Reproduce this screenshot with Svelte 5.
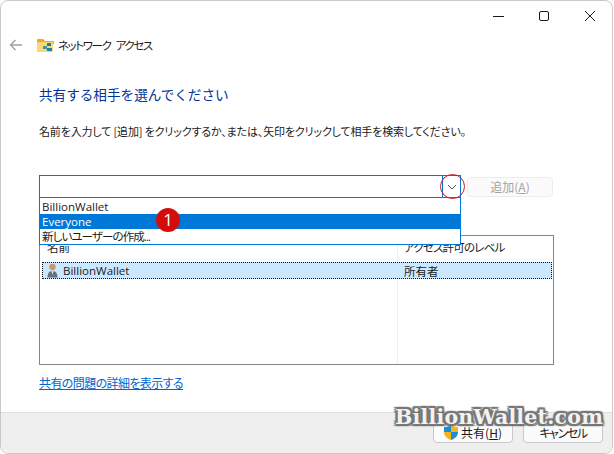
<script>
    const options = [
        { label: 'BillionWallet' },
        { label: 'Everyone', active: true },
        { label: '新しいユーザーの作成...', narrow: true }
    ]
</script>

<div class="window">
    <div class="controls">
        <svg width="14" height="14" viewBox="0 0 14 14"><path d="M2 7.5h11" stroke="#1a1a1a" fill="none" /></svg>
        <svg width="14" height="14" viewBox="0 0 14 14"><rect x="2.5" y="2.5" width="9" height="9" rx="1.5" stroke="#1a1a1a" fill="none" /></svg>
        <svg width="14" height="14" viewBox="0 0 14 14"><path d="M2 2l10 10M12 2L2 12" stroke="#1a1a1a" fill="none" /></svg>
    </div>

    <div class="nav">
        <svg class="back" width="14" height="12" viewBox="0 0 14 12"><path d="M13 6H1.500M6.500 1L1.500 6l5 5" stroke="#a0a0a0" stroke-width="1.400" fill="none" /></svg>
        <svg class="folder" width="17" height="15" viewBox="0 0 17 15">
            <path d="M0 2a1 1 0 0 1 1-1h5l2 2h8a1 1 0 0 1 1 1v2H0z" fill="#eeaa1c" />
            <rect y="4" width="16" height="10" rx="1" fill="#fbd777" />
            <rect x="10" y="5" width="4" height="3" fill="#1f7fa8" />
            <rect x="6" y="8" width="4" height="3" fill="#2a9fb4" />
            <rect x="10" y="10" width="5" height="3" fill="#1f7fa8" />
        </svg>
        <span>ネットワーク アクセス</span>
    </div>

    <div class="content">
        <h1>共有する相手を選んでください</h1>
        <p>名前を入力して [追加] をクリックするか、または、矢印をクリックして相手を検索してください。</p>

        <div class="picker">
            <div class="combo">
                <div class="combo-input"></div>
                <div class="combo-arrow">
                    <svg width="10" height="6" viewBox="0 0 10 6"><path d="M1 1l4 4 4-4" stroke="#555" fill="none" /></svg>
                </div>
            </div>
            <div class="add">追加(<u>A</u>)</div>
        </div>

        <div class="list">
            <div class="list-head">
                <div class="col-name">名前</div>
                <div class="col-level">アクセス許可のレベル</div>
            </div>
            <div class="list-row">
                <div class="col-name">
                    <svg width="11" height="15" viewBox="0 0 11 15">
                        <circle cx="5.500" cy="4" r="3.200" fill="#c49a6c" />
                        <path d="M.5 14.500c0-4.500 2-6.500 5-6.500s5 2 5 6.500z" fill="#66717f" />
                        <path d="M4.500 8h2l-1 4z" fill="#e8e8e8" />
                    </svg>
                    BillionWallet
                </div>
                <div class="col-level">所有者</div>
            </div>
            <div class="list-body">
                <div class="col-name"></div>
                <div class="col-level"></div>
            </div>
        </div>

        <a class="help" href="#help">共有の問題の詳細を表示する</a>
    </div>

    <div class="footer">
        <div class="btn">
            <svg width="14" height="15" viewBox="0 0 14 15">
                <path d="M7 0C5 1.500 3 2 0 2v5h7z" fill="#1a8fd8" />
                <path d="M7 0c2 1.500 4 2 7 2v5H7z" fill="#f3b51b" />
                <path d="M0 7h7v8C3 13.500 0 11 0 7z" fill="#f3b51b" />
                <path d="M7 7h7c0 4-3 6.500-7 8z" fill="#1a8fd8" />
            </svg>
            <span>共有(<u>H</u>)</span>
        </div>
        <div class="btn cancel">キャンセル</div>
    </div>

    <div class="dropdown">
        {#each options as option}
            <div class="option" class:active={option.active} class:narrow={option.narrow}>{option.label}</div>
        {/each}
    </div>
    <div class="badge">1</div>
    <div class="ring"></div>
    <div class="watermark">BillionWallet.com</div>
</div>

<style>
    :global(body) {
        background: #fff;
    }

    .window {
        position: relative;
        box-sizing: border-box;
        width: 613px;
        height: 454px;
        display: flex;
        flex-direction: column;
        border: 1px solid #c9c9c9;
        border-radius: 8px;
        overflow: hidden;
        background: #fff;
        font-family: 'Open Sans', 'Noto Sans CJK JP', sans-serif;
        font-size: 12px;
        font-feature-settings: 'palt';
        color: #1a1a1a;
    }

    .controls {
        height: 29px;
        display: flex;
        justify-content: flex-end;
        align-items: center;
        gap: 32px;
        padding-right: 15px;
    }

    .nav {
        height: 30px;
        display: flex;
        align-items: center;
        padding-left: 8px;
        margin-bottom: 24px;
        font-family: 'Noto Sans CJK JP', sans-serif;
        font-size: 11.500px;
        letter-spacing: -1.400px;
        word-spacing: 4px;
    }

    .back {
        margin-right: 14px;
    }

    .folder {
        margin-right: 4px;
    }

    .content {
        flex: 1;
        padding-left: 38px;
        padding-right: 58px;
    }

    h1 {
        margin: 0;
        font-family: 'Noto Sans CJK JP', sans-serif;
        font-feature-settings: normal;
        font-size: 13.600px;
        font-weight: 400;
        line-height: 20px;
        color: #003399;
    }

    p {
        margin: 18px 0 0;
        font-family: 'Noto Sans CJK JP', sans-serif;
        font-size: 11px;
        letter-spacing: -0.150px;
        line-height: 18px;
        white-space: nowrap;
    }

    .picker {
        margin-top: 35px;
        display: flex;
        align-items: center;
        gap: 6px;
    }

    .combo {
        box-sizing: border-box;
        width: 422px;
        height: 23px;
        display: flex;
        border: 1px solid #0078d7;
    }

    .combo-input {
        flex: 1;
    }

    .combo-arrow {
        width: 17px;
        display: flex;
        align-items: center;
        justify-content: center;
        border-left: 1px solid #0078d7;
    }

    .add {
        box-sizing: border-box;
        width: 86px;
        height: 20px;
        display: flex;
        align-items: center;
        justify-content: center;
        border: 1px solid #ececec;
        border-radius: 4px;
        background: #fbfbfb;
        font-family: 'Noto Sans CJK JP', sans-serif;
        color: #a3a3a3;
    }

    .list {
        box-sizing: border-box;
        width: 515px;
        height: 130px;
        margin-top: 37px;
        display: flex;
        flex-direction: column;
        border: 1px solid #858585;
        font-size: 11.500px;
    }

    .list-head,
    .list-row,
    .list-body {
        display: flex;
    }

    .list-head {
        height: 26px;
    }

    .list-head > div {
        box-sizing: border-box;
        padding-left: 7px;
        line-height: 24px;
    }

    .list-head .col-level {
        padding-left: 6px;
        border-left: 1px solid #efefef;
        letter-spacing: -0.800px;
    }

    .col-name {
        width: 357px;
        flex-shrink: 0;
    }

    .col-level {
        flex: 1;
    }

    .list-row {
        height: 17px;
        margin: 0 1px 0 2px;
        align-items: center;
        background: #cce8ff;
        outline: 1px dotted #111;
        outline-offset: -1px;
    }

    .list-row .col-name {
        box-sizing: border-box;
        width: 355px;
        display: flex;
        align-items: center;
        gap: 5px;
        padding-left: 5px;
    }

    .list-row .col-level {
        padding-left: 7px;
    }

    .list-body {
        flex: 1;
    }

    .list-body .col-level {
        border-left: 1px solid #efefef;
    }

    .help {
        display: block;
        width: max-content;
        margin-top: 9px;
        font-family: 'Noto Sans CJK JP', sans-serif;
        letter-spacing: -0.600px;
        line-height: 17px;
        color: #0066cc;
    }

    .footer {
        box-sizing: border-box;
        height: 41px;
        display: flex;
        justify-content: flex-end;
        align-items: flex-end;
        gap: 10px;
        padding: 0 9px 10px 0;
        background: #efefef;
        border-top: 1px solid #dedede;
        font-family: 'Noto Sans CJK JP', sans-serif;
    }

    .btn {
        box-sizing: border-box;
        width: 80px;
        height: 21px;
        display: flex;
        align-items: center;
        justify-content: center;
        gap: 3px;
        border: 1px solid #c8c8c8;
        border-radius: 4px;
        background: #fbfbfb;
    }

    .btn.cancel {
        letter-spacing: -1.400px;
    }

    .dropdown {
        position: absolute;
        left: 38px;
        top: 196px;
        box-sizing: border-box;
        width: 422px;
        height: 48px;
        padding-top: 1px;
        border: 1px solid #0078d7;
        background: #fff;
    }

    .option {
        height: 15px;
        line-height: 15px;
        padding-left: 2px;
        font-size: 11.500px;
        white-space: nowrap;
    }

    .option.active {
        background: #0078d7;
        color: #fff;
    }

    .option.narrow {
        letter-spacing: -0.900px;
    }

    .badge {
        position: absolute;
        left: 155px;
        top: 207px;
        width: 24px;
        height: 24px;
        border-radius: 50%;
        background: #d40c0c;
        color: #fff;
        font-family: 'Open Sans', sans-serif;
        font-size: 17px;
        line-height: 24px;
        text-align: center;
    }

    .ring {
        position: absolute;
        left: 439px;
        top: 173px;
        box-sizing: border-box;
        width: 25px;
        height: 25px;
        border: 1px solid #e01020;
        border-radius: 50%;
    }

    .watermark {
        position: absolute;
        left: 394px;
        top: 404px;
        font-family: 'DejaVu Serif', serif;
        font-size: 20.500px;
        font-weight: 700;
        letter-spacing: 0.2px;
        white-space: nowrap;
        color: #f2f2f2;
        text-shadow:
            2px 0 1px #777, -2px 0 1px #777, 0 2px 1px #777, 0 -2px 1px #777,
            2px 2px 1px #777, -2px 2px 1px #777, 2px -2px 1px #777, -2px -2px 1px #777;
    }
</style>
